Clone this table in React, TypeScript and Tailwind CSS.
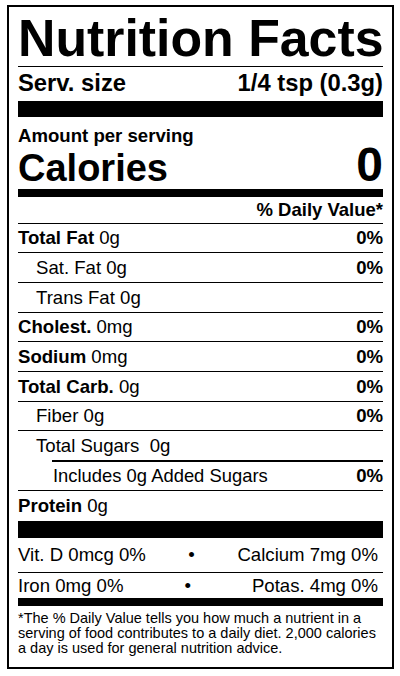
import React from "react";

function Row({
  label,
  value,
  dv,
  bold = true,
  indent = "pl-0",
  h = "h-[30px]",
}: {
  label: string;
  value: string;
  dv?: string;
  bold?: boolean;
  indent?: string;
  h?: string;
}) {
  return (
    <div className={`border-t border-black ${h} flex items-center justify-between ${indent}`}>
      <div className="text-[18.6px] leading-[18px] whitespace-pre">
        {bold ? <span className="font-bold">{label}</span> : <span>{label}</span>} <span>{value}</span>
      </div>
      {dv ? <div className="text-[18.6px] leading-[18px] font-bold">{dv}</div> : null}
    </div>
  );
}

export default function App() {
  return (
    <div className="w-[400px] h-[676px] bg-white pt-[5px] pl-[7px]">
      <div className="w-[387px] h-[664px] border-2 border-black px-[9px] text-black font-['Liberation_Sans',Arial,sans-serif]">
        <div className="h-[59px] pt-[6px]">
          <div className="text-[51.8px] leading-[51px] font-bold whitespace-nowrap">Nutrition Facts</div>
        </div>
        <div className="h-px bg-black" />
        <div className="h-[34px] pt-[4px] flex justify-between font-bold text-[23.8px] leading-[23px]">
          <span>Serv. size</span>
          <span>1/4 tsp (0.3g)</span>
        </div>
        <div className="h-[16px] bg-black" />
        <div className="h-[28px] pt-[10px] text-[18.6px] leading-[18px] font-bold">Amount per serving</div>
        <div className="h-[44px] flex justify-between items-baseline font-bold">
          <span className="text-[38px] leading-[40px]">Calories</span>
          <span className="text-[48px] leading-[40px]">0</span>
        </div>
        <div className="h-[8px] bg-black" />
        <div className="h-[26px] flex items-end justify-end pb-[4px] text-[18.5px] leading-[18px] font-bold">
          % Daily Value*
        </div>
        <Row label="Total Fat" value="0g" dv="0%" h="h-[29px]" />
        <Row label="Sat. Fat" value="0g" dv="0%" bold={false} indent="pl-[18px]" />
        <Row label="Trans Fat" value="0g" bold={false} indent="pl-[18px]" />
        <Row label="Cholest." value="0mg" dv="0%" h="h-[29px]" />
        <Row label="Sodium" value="0mg" dv="0%" />
        <Row label="Total Carb." value="0g" dv="0%" />
        <Row label="Fiber" value="0g" dv="0%" bold={false} indent="pl-[18px]" h="h-[29px]" />
        <Row label="Total Sugars " value="0g" bold={false} indent="pl-[18px]" />
        <div className="pl-[34px]">
          <div className="border-t-2 border-black h-[30px] flex items-center justify-between pl-[1px]">
            <span className="text-[18.4px] leading-[18px]">Includes 0g Added Sugars</span>
            <span className="text-[18.6px] leading-[18px] font-bold">0%</span>
          </div>
        </div>
        <div className="border-t border-black h-[31px] flex items-center pb-[1px]">
          <div className="text-[18.6px] leading-[18px]">
            <span className="font-bold">Protein</span> <span>0g</span>
          </div>
        </div>
        <div className="h-[17px] bg-black" />
        <div className="h-[34px] flex items-center justify-between pr-[5px] text-[18.6px] leading-[18px]">
          <span>Vit. D 0mcg 0%</span>
          <span>•</span>
          <span>Calcium 7mg 0%</span>
        </div>
        <div className="h-px bg-black" />
        <div className="h-[25px] flex items-center justify-between pr-[5px] text-[18.6px] leading-[18px]">
          <span>Iron 0mg 0%</span>
          <span>•</span>
          <span>Potas. 4mg 0%</span>
        </div>
        <div className="h-[8px] bg-black" />
        <div className="pt-[5px] text-[14.5px] leading-[15px]">
          *The % Daily Value tells you how much a nutrient in a serving of food contributes to a daily diet. 2,000 calories a day is used for general nutrition advice.
        </div>
      </div>
    </div>
  );
}
